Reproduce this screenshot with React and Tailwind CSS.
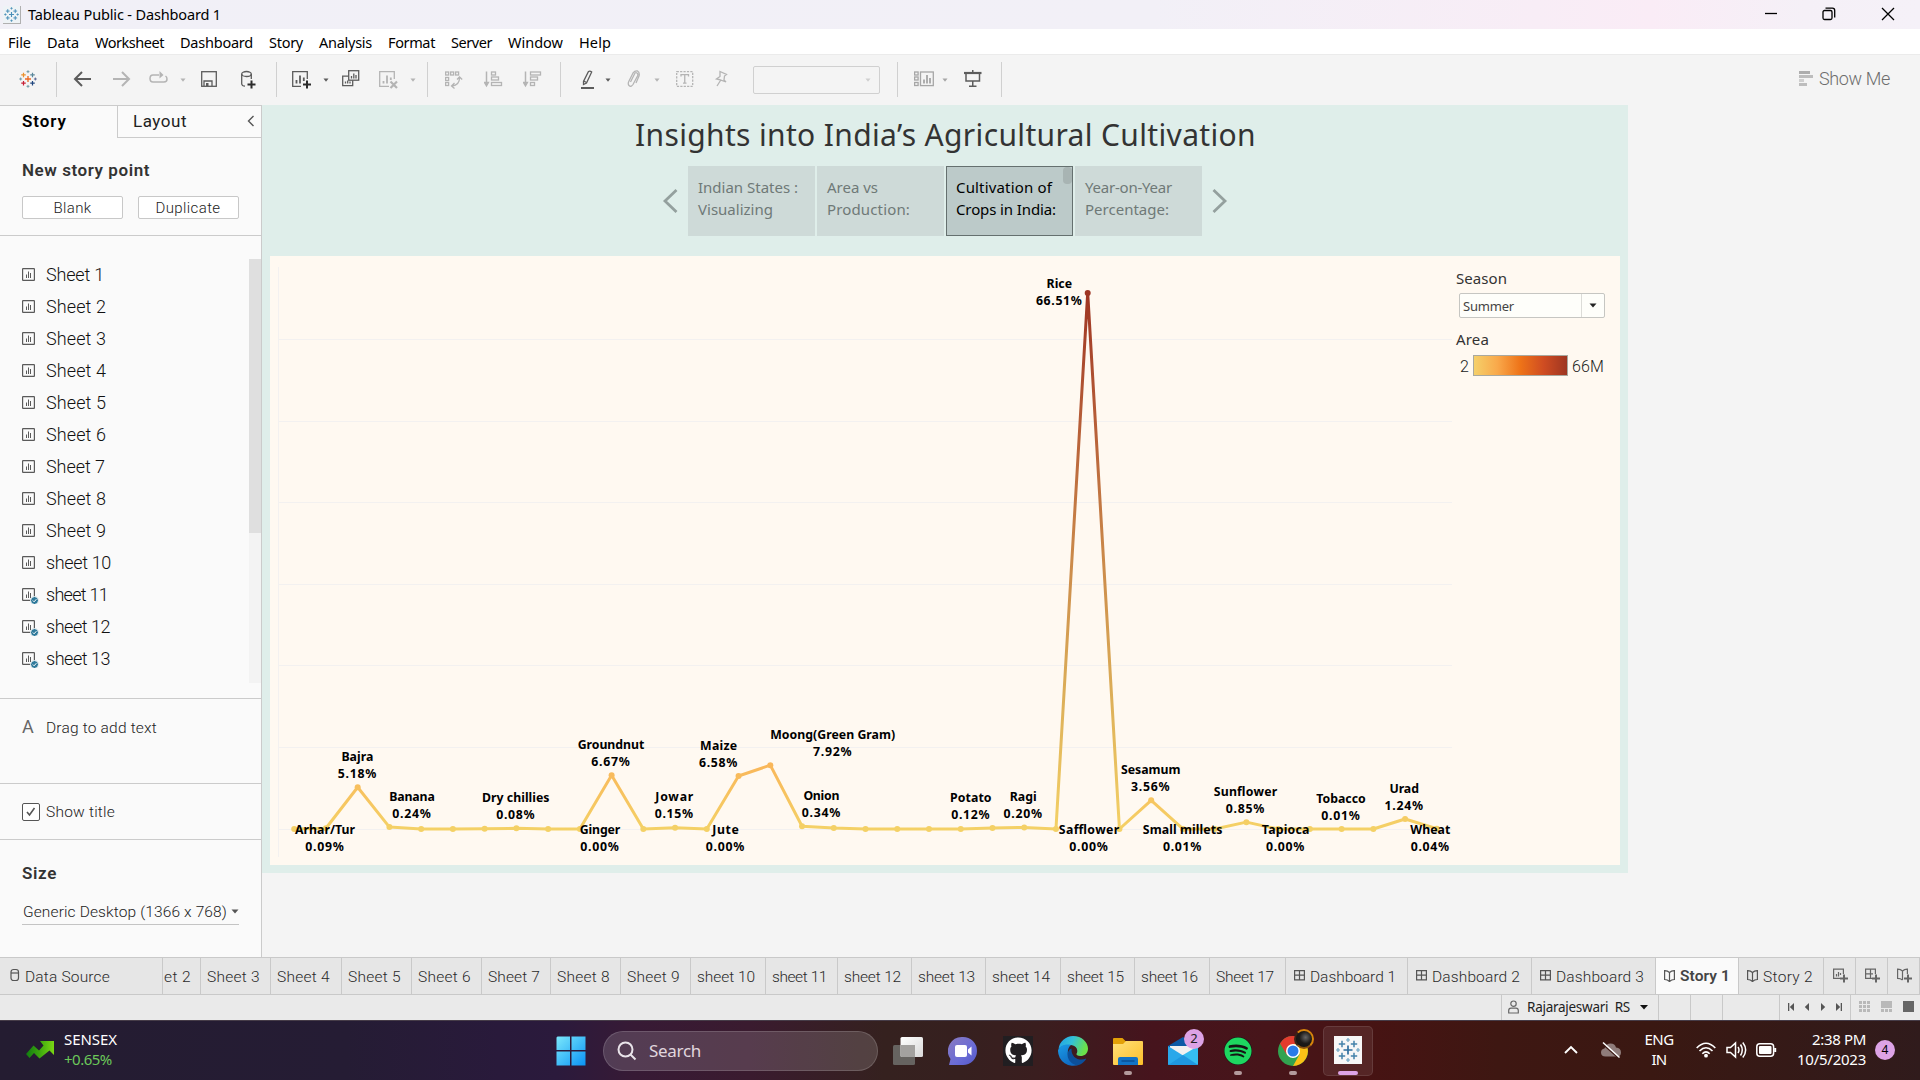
import React, { useLayoutEffect, useRef } from "react";
import { FaSpotify, FaGithub } from "react-icons/fa";

/* Single line of text tracked to a given width. */
function T({ w, className = "", children }) {
  const ref = useRef(null);
  useLayoutEffect(() => {
    const el = ref.current;
    el.style.letterSpacing = "0px";
    const natural = el.getBoundingClientRect().width;
    const n = el.textContent.length;
    el.style.letterSpacing = `${(w - natural) / n}px`;
  }, [w]);
  return (
    <span ref={ref} className={`inline-block shrink-0 whitespace-pre leading-none ${className}`}>
      {children}
    </span>
  );
}

const UI = "font-['Roboto',sans-serif]";
const UIS = "pt-[2px] font-light font-['Roboto',sans-serif]";
const TAB = "pt-[3px] font-['Roboto',sans-serif]";
const SEG = "font-['Noto_Sans',sans-serif]";

function Cross({ x, y, r, c, s = 1 }) {
  return <path d={`M${x - r} ${y}H${x + r}M${x} ${y - r}V${y + r}`} stroke={c} strokeWidth={s} fill="none" />;
}

function TableauMark({ size, mono, className = "" }) {
  const m = mono ? "#4a8fb8" : null;
  return (
    <svg width={size} height={size} viewBox="0 0 24 24" className={className}>
      <Cross x={12} y={12} r={4} c={m || "#eb6a24"} s={1.8} />
      <Cross x={6} y={6.5} r={3} c={m || "#eb912c"} s={1.6} />
      <Cross x={18} y={6.5} r={3} c={m || "#59879b"} s={1.6} />
      <Cross x={6} y={17.5} r={3} c={m || "#c72035"} s={1.6} />
      <Cross x={18} y={17.5} r={3} c={m || "#1f457e"} s={1.6} />
      <Cross x={12} y={2.2} r={1.9} c={m || "#7099a6"} s={1.3} />
      <Cross x={12} y={21.8} r={1.9} c={m || "#7099a6"} s={1.3} />
      <Cross x={2.2} y={12} r={1.9} c={m || "#7099a6"} s={1.3} />
      <Cross x={21.8} y={12} r={1.9} c={m || "#5b6591"} s={1.3} />
    </svg>
  );
}

/* ---------- title bar and menu ---------- */

function TitleBar() {
  return (
    <div className="flex h-[29px] items-center bg-[linear-gradient(90deg,#f1f0f7_0%,#f2f0f7_60%,#f8edf6_80%,#faecf6_86%,#f5f0f7_94%,#f5f1f8_100%)]">
      <div className="ml-[3px] flex h-[18px] w-[18px] items-center justify-center border-r border-b border-[#b0b0b0] bg-[#eef3f6]">
        <TableauMark size={15} mono />
      </div>
      <T w={193} className={`ml-[7px] text-[14.5px] text-black ${SEG}`}>Tableau Public - Dashboard 1</T>
      <svg width="160" height="20" viewBox="0 0 160 20" className="mb-px ml-auto" fill="none" stroke="#000" strokeWidth="1.3">
        <path d="M5 9.5H17" />
        <rect x="63" y="6.5" width="9" height="9" rx="1.5" />
        <path d="M65.500 4.2H72.500A2.2 2.2 0 0 1 74.700 6.4V13.5" />
        <path d="M122 4L134 16M134 4L122 16" />
      </svg>
    </div>
  );
}

const MENU = [
  ["File", 23], ["Data", 32], ["Worksheet", 69], ["Dashboard", 73], ["Story", 34],
  ["Analysis", 53], ["Format", 47], ["Server", 41], ["Window", 55], ["Help", 32],
];

function MenuBar() {
  return (
    <div className="flex h-[25px] items-center gap-4 bg-white pt-[2px] pl-2">
      {MENU.map(([label, w]) => (
        <T key={label} w={w} className={`text-[14.5px] text-black ${SEG}`}>{label}</T>
      ))}
    </div>
  );
}

/* ---------- toolbar ---------- */

const DK = "#5c5c5c";
const LT = "#b4b4b4";

function Ico({ w, className = "", c = DK, children }) {
  return (
    <svg width={w} height="20" viewBox={`0 0 ${w} 20`} className={`shrink-0 ${className}`} fill="none" stroke={c} strokeWidth="1.3">
      {children}
    </svg>
  );
}

function Caret({ c = DK, className = "" }) {
  return (
    <svg width="6" height="4" viewBox="0 0 6 4" className={`shrink-0 ${className}`}>
      <path d="M0.5 0.5H5.5L3 3.7Z" fill={c} />
    </svg>
  );
}

function Sep({ className = "" }) {
  return <div className={`h-[35px] w-px shrink-0 bg-[#d0d0d0] ${className}`} />;
}

function Toolbar() {
  return (
    <div className="flex h-[51px] items-center border-t border-[#ebebeb] bg-[#f4f4f4] pb-px">
      <TableauMark size={18} className="mb-[2px] ml-[19px]" />
      <Sep className="ml-[19px]" />
      <Ico w={18} className="ml-[16px]"><path d="M18 9H2M9 2L2 9L9 16" strokeWidth="2" /></Ico>
      <Ico w={18} className="ml-[22px]" c={LT}><path d="M0 9H16M9 2L16 9L9 16" strokeWidth="2" /></Ico>
      <Ico w={19} className="ml-[18px]" c={LT}>
        <path d="M10 5H4Q1 5 1 8.500Q1 12 4 12H15Q18 12 18 9Q18 7 16.500 6" strokeWidth="1.5" />
        <path d="M10.500 1L14.500 5L10.500 8.500Z" fill={LT} stroke="none" />
      </Ico>
      <Caret c={LT} className="ml-[12px]" />
      <Ico w={16} className="ml-[15px]">
        <rect x="0.7" y="1.700" width="14.600" height="14.600" />
        <path d="M3 16V11H11V16" /><rect x="5" y="13" width="2.500" height="3" fill={DK} stroke="none" />
      </Ico>
      <Ico w={15} className="ml-[24px]">
        <ellipse cx="5.500" cy="4" rx="4.800" ry="2.500" />
        <path d="M0.700 4V14Q1 16 4 16.200M10.300 4V9" />
        <path d="M10.500 10.500V18.500M6.500 14.500H14.500" stroke="#2b2b2b" strokeWidth="2" />
      </Ico>
      <Sep className="ml-[20px]" />
      <Ico w={19} className="ml-[15px]">
        <path d="M9 16.300H0.700V1.700H15.300V9" />
        <path d="M4.500 10V13.500M8 5.500V13.500M11.800 7.500V11" strokeWidth="1.800" />
        <path d="M15 10.500V18.500M11 14.500H19" stroke="#2b2b2b" strokeWidth="2" />
      </Ico>
      <Caret className="ml-[12px]" />
      <Ico w={18} className="ml-[13px]">
        <rect x="6.700" y="0.700" width="10" height="9.500" />
        <path d="M9.500 8.500V6M11.800 8.500V3.500M14 8.500V5" />
        <path d="M6.700 6.200H0.700V15.700H10.700V10.200M3.500 13.500V11.500M5.700 13.500V10.500M8 13.500V11.500" />
      </Ico>
      <Ico w={19} className="ml-[19px]" c={LT}>
        <path d="M10 16.300H0.700V1.700H15.300V9" />
        <path d="M4.500 11V13.500M8 5.500V13.500M11.800 7.500V10" strokeWidth="1.800" />
        <path d="M11.500 11.500L18 18M18 11.500L11.500 18" strokeWidth="2.200" />
      </Ico>
      <Caret c={LT} className="ml-[12px]" />
      <Sep className="ml-[11px]" />
      <Ico w={18} className="ml-[17px]" c={LT}>
        <rect x="0.600" y="2" width="3" height="3" /><rect x="5.600" y="2" width="3" height="3" /><rect x="10.600" y="2" width="3" height="3" />
        <rect x="0.600" y="7.500" width="3" height="3" /><rect x="0.600" y="12.500" width="3" height="3" />
        <path d="M7 16Q14.500 15 14.500 8M9.500 13L6.500 16L9.500 18.500M12 9.500L14.500 7L17.200 9.500" />
      </Ico>
      <Ico w={19} className="ml-[21px]" c={LT}>
        <path d="M2.500 1.500V14" strokeWidth="1.500" /><path d="M0.500 12.500L2.500 16L4.500 12.500Z" fill={LT} />
        <rect x="7.500" y="2" width="4" height="3" /><rect x="7.500" y="7" width="7" height="3" /><rect x="7.500" y="12.500" width="10" height="3" />
      </Ico>
      <Ico w={19} className="ml-[20px]" c={LT}>
        <path d="M2.500 1.500V14" strokeWidth="1.500" /><path d="M0.500 12.500L2.500 16L4.500 12.500Z" fill={LT} />
        <rect x="7.500" y="2" width="10" height="3" /><rect x="7.500" y="7" width="7" height="3" /><rect x="7.500" y="12.500" width="4" height="3" />
      </Ico>
      <Sep className="ml-[18px]" />
      <Ico w={14} className="ml-[20px]">
        <path d="M7.500 1.500Q9 0.500 10.700 2L5.500 13L2.500 14.500V11.500Z" /><path d="M2.800 11L5.500 12.500" />
        <path d="M0 18H13" strokeWidth="2" />
      </Ico>
      <Caret className="ml-[10px]" />
      <Ico w={14} className="ml-[16px]" c={LT}>
        <path d="M3.500 12L7.500 4Q8.500 2 10 3Q11.500 4 10.500 6L6 14.500Q4 17.500 2 15.500Q0.500 14 2 11L6 3Q8 0.500 10.500 1Q13 2.500 12 6L9 13" />
      </Ico>
      <Caret c={LT} className="ml-[13px]" />
      <Ico w={18} className="ml-[16px]" c={LT}>
        <rect x="0.700" y="1.700" width="16" height="14.600" strokeDasharray="2.200 1.200" />
        <path d="M5 6.500V4.700H12.500V6.500M8.750 4.700V13M7 13.200H10.500" />
      </Ico>
      <Ico w={14} className="ml-[20px]" c={LT}>
        <path d="M6 1.500L12.500 4.500L10.500 6L10 10L12 12L5 9.500L2.500 9L6 6.500Z M6.500 10.500L3 16" />
      </Ico>
      <div className="ml-[25px] flex h-[28px] w-[127px] shrink-0 items-center justify-end rounded-[2px] border border-[#d0d0d0] pr-[8px]">
        <Caret c="#cfcfcf" />
      </div>
      <Sep className="ml-[17px]" />
      <Ico w={20} className="ml-[16px]" c="#a6a6a6">
        <rect x="0.600" y="2" width="3.500" height="3" /><rect x="0.600" y="7" width="3.500" height="3" /><rect x="0.600" y="12.500" width="3.500" height="3" />
        <rect x="6.500" y="2" width="12.800" height="13.600" />
        <path d="M10 13.500V9.500M13 13.500V5M16 13.500V8" strokeWidth="1.800" />
      </Ico>
      <Caret c="#a6a6a6" className="ml-[8px]" />
      <Ico w={18} className="ml-[16px]">
        <path d="M0 3H17.500" strokeWidth="2.200" /><path d="M2 3V11H15.500V3M8.750 11V16M5 16.300H12.500M8.750 0V3" strokeWidth="1.500" />
      </Ico>
      <Sep className="ml-[19px]" />
      <svg width="15" height="16" viewBox="0 0 15 16" className="mb-[2px] ml-auto shrink-0">
        <rect x="0" y="0" width="11" height="3" fill="#adadad" /><rect x="0" y="4" width="14" height="3" fill="#bdbdbd" />
        <rect x="0" y="8" width="5" height="3" fill="#cfcfcf" /><rect x="0" y="12" width="8" height="3" fill="#bdbdbd" />
      </svg>
      <T w={71} className={`mr-[30px] mb-px ml-[5px] text-[18px] font-light text-[#6d6d6d] ${UI}`}>Show Me</T>
    </div>
  );
}

/* ---------- side panel ---------- */

const SHEETS = [
  ["Sheet 1", 58], ["Sheet 2", 60], ["Sheet 3", 60], ["Sheet 4", 60], ["Sheet 5", 60], ["Sheet 6", 60], ["Sheet 7", 59],
  ["Sheet 8", 60], ["Sheet 9", 60], ["sheet 10", 65], ["sheet 11", 62, 1], ["sheet 12", 64, 1], ["sheet 13", 64, 1],
];

function SheetIcon({ used }) {
  return (
    <svg width="18" height="18" viewBox="0 0 18 18" className="shrink-0" fill="none" stroke="#5a5a5a">
      <rect x="0.600" y="2.600" width="11.800" height="11.800" rx="0.500" strokeWidth="1.200" />
      <path d="M4.500 12V8.500M6.500 12V5.500M8.500 12V7" />
      {used && (
        <g>
          <circle cx="12.500" cy="14.500" r="4" fill="#2f7a9b" stroke="#fafafa" />
          <path d="M10.800 14.500L12.100 15.800L14.400 13.200" stroke="#fff" />
        </g>
      )}
    </svg>
  );
}

function SidePanel() {
  return (
    <div className="flex h-[852px] w-[262px] shrink-0 flex-col border-t border-r border-[#cbcbcb] bg-[#fafafa]">
      <div className="flex h-[32px] shrink-0">
        <div className="flex w-[117px] items-center pb-[2px] pl-[22px]">
          <T w={45} className={`text-[17px] font-semibold text-black ${UI}`}>Story</T>
        </div>
        <div className="flex flex-1 items-center border-b border-l border-[#cbcbcb] pl-[15px]">
          <T w={54} className={`text-[17px] text-[#222] ${UI}`}>Layout</T>
          <svg width="8" height="12" viewBox="0 0 8 12" className="mr-[6px] mb-[2px] ml-auto"><path d="M6.500 1L1.500 6L6.500 11" fill="none" stroke="#555" strokeWidth="1.400" /></svg>
        </div>
      </div>
      <div className="h-[98px] shrink-0 border-b border-[#cbcbcb] pt-[23px] pl-[22px]">
        <div className="flex h-[18px] items-center">
          <T w={128} className={`text-[17px] font-semibold text-[#333] ${UI}`}>New story point</T>
        </div>
        <div className="mt-[17px] flex gap-[15px]">
          <div className="flex h-[23px] w-[101px] items-center justify-center rounded-[2px] border border-[#c8c8c8] bg-white">
            <T w={38} className={`text-[15px] text-[#222] ${UIS}`}>Blank</T>
          </div>
          <div className="flex h-[23px] w-[101px] items-center justify-center rounded-[2px] border border-[#c8c8c8] bg-white pr-px">
            <T w={65} className={`text-[15px] text-[#222] ${UIS}`}>Duplicate</T>
          </div>
        </div>
      </div>
      <div className="flex h-[463px] shrink-0 border-b border-[#cbcbcb] pt-[23px]">
        <div className="flex-1 pl-[22px]">
          {SHEETS.map(([name, w, used]) => (
            <div key={name} className="flex h-[32px] items-center">
              <SheetIcon used={used} />
              <T w={w} className={`ml-[6px] text-[18px] font-light text-[#111] ${UI}`}>{name}</T>
            </div>
          ))}
        </div>
        <div className="h-[424px] w-[12px] bg-[#f3f3f3]"><div className="h-[274px] bg-[#dfdfdf]" /></div>
      </div>
      <div className="flex h-[85px] shrink-0 border-b border-[#cbcbcb] pt-[19px] pl-[22px]">
        <T w={14} className={`text-[18px] text-[#666] ${UI}`}>A</T>
        <T w={111} className={`mt-px ml-[10px] text-[15.500px] text-[#222] ${UIS}`}>Drag to add text</T>
      </div>
      <div className="flex h-[56px] shrink-0 items-center border-b border-[#cbcbcb] pl-[22px]">
        <div className="flex h-[18px] w-[18px] items-center justify-center rounded-[2px] border border-[#555] bg-white">
          <svg width="12" height="12" viewBox="0 0 12 12"><path d="M2 6L4.500 9L9.500 2" fill="none" stroke="#555" strokeWidth="1.600" /></svg>
        </div>
        <T w={69} className={`ml-[6px] text-[15.500px] text-[#222] ${UIS}`}>Show title</T>
      </div>
      <div className="flex flex-1 flex-col pt-[25px] pl-[22px]">
        <T w={35} className={`self-start text-[17px] font-semibold text-[#333] ${UI}`}>Size</T>
        <div className="mt-[17px] flex h-[26px] w-[217px] items-center border-b border-[#c4c4c4] pl-px">
          <T w={204} className={`text-[15.500px] text-[#222] ${UIS}`}>Generic Desktop (1366 x 768)</T>
          <svg width="8" height="5" viewBox="0 0 8 5" className="ml-[4px]"><path d="M0.500 0.500H7.500L4 4.500Z" fill="#555" /></svg>
        </div>
      </div>
    </div>
  );
}

/* ---------- story canvas ---------- */

const POINTS = [
  ["Indian States :", 100, "Visualizing", 75, false],
  ["Area vs", 51, "Production:", 83, false],
  ["Cultivation of", 96, "Crops in India:", 100, true],
  ["Year-on-Year", 87, "Percentage:", 84, false],
];

function StoryNav() {
  return (
    <div className="flex items-center">
      <svg width="16" height="26" viewBox="0 0 16 26" className="ml-[400px]"><path d="M14.500 2L3 13L14.500 24" fill="none" stroke="#94a09e" strokeWidth="2.800" /></svg>
      <div className="ml-[10px] flex gap-[2px]">
        {POINTS.map(([a, wa, b, wb, on]) => (
          <div key={a} className={`relative flex h-[70px] w-[127px] flex-col ${on ? "border border-[#65706f] bg-[#bccac9] pt-[13px] pl-[9px] text-black" : "bg-[#cedad8] pt-[14px] pl-[10px] text-[#6f7977]"}`}>
            <T w={wa} className={`self-start text-[15px] ${SEG}`}>{a}</T>
            <T w={wb} className={`mt-[7px] self-start text-[15px] ${SEG}`}>{b}</T>
            {on && <div className="absolute top-0 right-0 h-[17px] w-[9px] rounded-[4px] bg-[#a8b4b3]" />}
          </div>
        ))}
      </div>
      <svg width="16" height="26" viewBox="0 0 16 26" className="ml-[10px]"><path d="M1.500 2L13 13L1.500 24" fill="none" stroke="#94a09e" strokeWidth="2.800" /></svg>
    </div>
  );
}

const VALUES = [
  0, 0.09, 5.18, 0.24, 0, 0, 0.03, 0.08, 0, 0, 6.67, 0, 0.15, 0, 6.58, 7.92, 0.34, 0.12, 0, 0, 0, 0, 0.12, 0.2, 0, 66.51, 0,
  3.56, 0.01, 0, 0.85, 0, 0, 0.01, 0, 1.24, 0.04,
];
const X0 = 294.2, DX = 31.74, Y0 = 829, KY = 8.06;

/* name, value, centre x, baseline of the name, width of the name */
const LABELS = [
  ["Arhar/Tur", "0.09%", 325, 833.6, 60], ["Bajra", "5.18%", 357.4, 761, 32], ["Banana", "0.24%", 412, 801.3, 45.5],
  ["Dry chillies", "0.08%", 515.8, 802, 67.5], ["Ginger", "0.00%", 600, 833.6, 40.5], ["Groundnut", "6.67%", 611, 749.3, 66.5],
  ["Jowar", "0.15%", 674.3, 801.3, 38], ["Maize", "6.58%", 718.6, 750, 37], ["Jute", "0.00%", 725.5, 833.6, 26.5],
  ["Moong(Green Gram)", "7.92%", 832.7, 739.3, 125], ["Onion", "0.34%", 821.4, 800.3, 36], ["Potato", "0.12%", 970.8, 802.3, 41.5],
  ["Ragi", "0.20%", 1023.2, 801.3, 27], ["Rice", "66.51%", 1059.3, 288, 25.5], ["Safflower", "0.00%", 1089, 833.6, 60.5],
  ["Sesamum", "3.56%", 1150.7, 774, 59.5], ["Small millets", "0.01%", 1182.6, 833.6, 79.5], ["Sunflower", "0.85%", 1245.5, 796, 63.5],
  ["Tapioca", "0.00%", 1285.6, 833.6, 47.5], ["Tobacco", "0.01%", 1341, 803.3, 49.5], ["Urad", "1.24%", 1404.2, 793, 29.5],
  ["Wheat", "0.04%", 1430.3, 833.6, 40],
];

function Chart() {
  const pts = VALUES.map((v, i) => [X0 + i * DX, Y0 - v * KY]);
  const line = (a) => a.map((p) => p.join(",")).join(" ");
  return (
    <svg width="1180" height="609" viewBox="270 256 1180 609" className="shrink-0 overflow-visible">
      <defs>
        <linearGradient id="low" gradientUnits="userSpaceOnUse" x1="0" y1="829" x2="0" y2="765">
          <stop offset="0" stopColor="#f4d166" /><stop offset="1" stopColor="#f9b75a" />
        </linearGradient>
        <linearGradient id="peak" gradientUnits="userSpaceOnUse" x1="0" y1="829" x2="0" y2="293">
          <stop offset="0" stopColor="#f4d166" /><stop offset="0.250" stopColor="#dcae58" /><stop offset="0.500" stopColor="#cb8a4a" />
          <stop offset="0.750" stopColor="#b75f38" /><stop offset="1" stopColor="#9e3523" />
        </linearGradient>
      </defs>
      <g stroke="#f3f1f0" strokeWidth="1">
        {[339.5, 421.5, 502.5, 584.5, 665.5, 747.5, 829.5].map((y) => <path key={y} d={`M278 ${y}H1452`} />)}
        <path d="M278.500 267V857" />
      </g>
      <g fill="none" strokeWidth="3" strokeLinejoin="round">
        <polyline points={line(pts.slice(0, 25))} stroke="url(#low)" />
        <polyline points={line(pts.slice(26))} stroke="url(#low)" />
        <polyline points={line(pts.slice(24, 27))} stroke="url(#peak)" />
      </g>
      {pts.map(([x, y], i) => <circle key={i} cx={x} cy={y} r="3" fill={i === 25 ? "#9e3523" : "url(#low)"} />)}
      <g fontFamily="Noto Sans, sans-serif" fontWeight="700" fontSize="12.300" fill="#000" textAnchor="middle">
        {LABELS.map(([n, v, x, y, w]) => (
          <g key={n}>
            <text x={x} y={y} textLength={w}>{n}</text>
            <text x={x - 0.4} y={y + 17} textLength={v.length > 5 ? 46 : 38.500}>{v}</text>
          </g>
        ))}
      </g>
    </svg>
  );
}

function Legend() {
  return (
    <div className="ml-[6px] flex w-[164px] flex-col pt-[15px]">
      <T w={51} className={`self-start text-[15px] text-[#333] ${SEG}`}>Season</T>
      <div className="mt-[7px] ml-[3px] flex h-[25px] w-[146px] rounded-[2px] border border-[#c6c6c2] bg-[#fefefa]">
        <div className="flex flex-1 items-center border-r border-[#dcdcd8] pt-[2px] pl-[3px]">
          <T w={51} className={`text-[13px] text-[#444] ${SEG}`}>Summer</T>
        </div>
        <div className="flex w-[22px] items-center justify-center">
          <svg width="8" height="5" viewBox="0 0 8 5"><path d="M0.500 0.500H7.500L4 4.500Z" fill="#222" /></svg>
        </div>
      </div>
      <T w={33} className={`mt-[14px] self-start text-[15px] text-[#333] ${SEG}`}>Area</T>
      <div className="mt-[8px] ml-[4px] flex h-[21px] items-center">
        <T w={9} className={`text-[16px] text-[#222] ${UIS}`}>2</T>
        <div className="ml-[4px] h-[21px] w-[95px] border border-[#a9a9a0] bg-[linear-gradient(90deg,#f5d06a,#f9a94b_25%,#ee7318_50%,#cf4c22_75%,#9e3622)]" />
        <T w={32} className={`ml-[4px] text-[16px] text-[#222] ${UIS}`}>66M</T>
      </div>
    </div>
  );
}

function Canvas() {
  return (
    <div className="h-[768px] w-[1366px] bg-[#dfeeea]">
      <div className="flex h-[61px] items-center pb-px pl-[373px]">
        <T w={621} className={`text-[30px] text-[#333] ${SEG}`}>Insights into India’s Agricultural Cultivation</T>
      </div>
      <StoryNav />
      <div className="mt-[20px] ml-[8px] flex h-[609px] w-[1350px] bg-[#fff9f1]">
        <Chart />
        <Legend />
      </div>
    </div>
  );
}

/* ---------- tabs and status ---------- */

const TABS = [
  ["Sheet 3", 70, 53], ["Sheet 4", 71, 53], ["Sheet 5", 70, 53], ["Sheet 6", 70, 53], ["Sheet 7", 69, 52], ["Sheet 8", 70, 53],
  ["Sheet 9", 70, 53], ["sheet 10", 75, 58], ["sheet 11", 72, 55], ["sheet 12", 74, 57], ["sheet 13", 74, 57], ["sheet 14", 75, 58],
  ["sheet 15", 74, 57], ["sheet 16", 75, 57], ["Sheet 17", 76, 58], ["Dashboard 1", 122, 86], ["Dashboard 2", 124, 88],
  ["Dashboard 3", 124, 88], ["Story 1", 83, 50], ["Story 2", 85, 50],
];

function GridIcon() {
  return <path d="M0.600 1.600H10.400V10.900H0.600ZM5.500 1.600V10.900M0.600 6.200H10.400" />;
}
function BookIcon() {
  return <path d="M5.500 3.500Q3.500 1.500 0.600 1.600V10.500Q3.500 10.500 5.500 12.500Q7.500 10.500 10.400 10.500V1.600Q7.500 1.500 5.500 3.500V12" />;
}

function TabBar() {
  return (
    <div className="flex h-[38px] border-y border-[#c9c9c9] bg-[#e6e6e6]">
      <div className="flex w-[163px] items-center border-r border-[#c9c9c9] pl-[10px]">
        <svg width="10" height="14" viewBox="0 0 10 14" className="mb-[3px]" fill="none" stroke="#555" strokeWidth="1.200"><rect x="1" y="1.500" width="7.500" height="11" rx="2.500" /><path d="M1 5H8.500" /></svg>
        <T w={85} className={`ml-[5px] text-[15.500px] font-light text-[#2a2a2a] ${TAB}`}>Data Source</T>
      </div>
      <div className="flex w-[38px] items-center border-r border-[#c9c9c9] pl-px">
        <T w={27} className={`text-[15.500px] font-light text-[#2a2a2a] ${TAB}`}>et 2</T>
      </div>
      {TABS.map(([name, w, tw]) => {
        const dash = name.startsWith("Dash");
        const story = name.startsWith("Story");
        const on = name === "Story 1";
        return (
          <div key={name} style={{ width: w }} className={`flex shrink-0 items-center border-r border-[#c9c9c9] ${on ? "bg-[#fafafa]" : ""} ${dash || story ? "pl-[8px]" : "pl-[6px]"}`}>
            {(dash || story) && (
              <svg width="11" height="13" viewBox="0 0 11 13" className={dash ? "mr-[5px] mb-[2px]" : "mr-[5px] mb-[1px]"} fill="none" stroke="#555" strokeWidth="1.200">
                {dash ? <GridIcon /> : <BookIcon />}
              </svg>
            )}
            <T w={tw} className={`text-[15.500px] ${on ? "mb-px font-semibold text-[#444]" : "font-light text-[#2a2a2a]"} ${TAB}`}>{name}</T>
          </div>
        );
      })}
      {["s", "g", "b"].map((k) => (
        <div key={k} className="flex w-[32px] items-center justify-center border-r border-[#c9c9c9] pl-[2px]">
          <svg width="16" height="16" viewBox="0 0 16 16" fill="none" stroke="#666" strokeWidth="1.200">
            {k === "s" && <path d="M7 10.400H0.600V1.100H10.400V6M3.500 8.500V6M5.500 8.500V4M7.500 7V5" />}
            {k === "g" && <path d="M7 10.400H0.600V1.100H10.400V6M5.500 1.100V10.400M0.600 5.800H8" />}
            {k === "b" && <path d="M5.500 3Q3.500 1 0.600 1.100V10.400Q3.500 10.400 5.500 12M10.400 6V1.100Q7.500 1 5.500 3V12" />}
            <path d="M11 6.500V14.500M7 10.500H15" strokeWidth="2" />
          </svg>
        </div>
      ))}
    </div>
  );
}

function StatusBar() {
  return (
    <div className="flex h-[25px] justify-end bg-[#eaeaea]">
      <div className="flex w-[157px] items-center border-l border-[#c9c9c9] pl-[6px]">
        <svg width="11" height="14" viewBox="0 0 11 14" className="mb-px" fill="none" stroke="#666" strokeWidth="1.200"><circle cx="5.500" cy="3.700" r="2.700" /><path d="M0.700 13V10.500Q0.700 8.200 3 8.200H8Q10.300 8.200 10.300 10.500V13Z" /></svg>
        <T w={103} className={`ml-[8px] text-[13.500px] text-[#222] ${SEG}`}>Rajarajeswari  RS</T>
        <svg width="8" height="5" viewBox="0 0 8 5" className="ml-[10px]"><path d="M0 0H8L4 4.500Z" fill="#111" /></svg>
      </div>
      <div className="w-[32px] border-l border-[#c9c9c9]" />
      <div className="w-[32px] border-l border-[#c9c9c9]" />
      <div className="w-[57px] border-l border-[#c9c9c9]" />
      <div className="flex w-[71px] items-center border-l border-[#c9c9c9] pb-[2px] pl-[8px]">
        <svg width="56" height="8" viewBox="0 0 56 8" fill="#555"><path d="M0 0H1.300V8H0ZM6 0V8L1.800 4ZM21 0V8L16.800 4ZM33 0V8L37.200 4ZM48 0V8L52.200 4ZM52.700 0H54V8H52.700Z" /></svg>
      </div>
      <div className="flex w-[70px] items-center border-l border-[#c9c9c9] pb-[2px] pl-[8px]">
        <svg width="56" height="12" viewBox="0 0 56 12" fill="#b9b9b9">
          {[0, 4, 8].map((x) => [0, 4, 8].map((y) => <rect key={`${x}-${y}`} x={x} y={y} width="3" height="3" />))}
          <rect x="22" y="0" width="11" height="7" />
          {[22, 26, 30].map((x) => <rect key={x} x={x} y="8" width="3" height="3" />)}
          <rect x="44" y="0" width="11" height="11" fill="#666" />
        </svg>
      </div>
    </div>
  );
}

/* ---------- taskbar ---------- */

function App30({ children, dot }) {
  return (
    <div className="relative flex h-[60px] w-[30px] shrink-0 items-center justify-center">
      {children}
      {dot && <div className="absolute bottom-[6px] left-[11px] h-[4px] w-[8px] rounded-full bg-[#b39a9c]" />}
    </div>
  );
}

function Taskbar() {
  return (
    <div className="flex h-[60px] items-center border-t border-[#463c48] bg-[linear-gradient(90deg,#241c31_0%,#251c34_18%,#291a3b_26%,#2b1a3c_29%,#371a35_33%,#3a1b2f_39%,#35211f_46%,#36201f_50%,#3a1e1f_54%,#46141d_60%,#47151a_66%,#471313_71%,#3e1712_78%,#3a1812_86%,#301b1c_100%)]">
      <svg width="28" height="20" viewBox="0 0 28 20" className="mb-[4px] ml-[26px]">
        <defs><linearGradient id="up" x1="0" x2="1"><stop offset="0" stopColor="#107c10" /><stop offset="0.500" stopColor="#3ea80e" /><stop offset="1" stopColor="#7bd614" /></linearGradient></defs>
        <path d="M0 15L7.500 6.500L13 11.500L17.500 6.500L14 2H28V16L23.500 11.500L13.500 19.500L8 14L3.500 19Z" fill="url(#up)" />
      </svg>
      <div className="mb-[3px] ml-[10px] flex flex-col gap-[5px]">
        <T w={53} className={`text-[15px] text-white ${SEG}`}>SENSEX</T>
        <T w={50} className={`text-[15px] text-[#6cc85a] ${SEG}`}>+0.65%</T>
      </div>
      <svg width="30" height="30" viewBox="0 0 30 30" className="ml-[439px]">
        <defs><linearGradient id="win" x1="0" y1="0" x2="1" y2="1"><stop offset="0" stopColor="#7be8fb" /><stop offset="1" stopColor="#0a93f5" /></linearGradient></defs>
        <path d="M1.500 0.500H14V14H0.500V1.500ZM15.500 0.500H29.500V14H15.500ZM0.500 15.500H14V29.500H0.500ZM15.500 15.500H29.500V29.500H15.500Z" fill="url(#win)" />
      </svg>
      <div className="ml-[17px] flex h-[40px] w-[275px] items-center rounded-full border border-white/15 bg-white/15 pl-[13px]">
        <svg width="20" height="20" viewBox="0 0 20 20" fill="none" stroke="#e9e4ea" strokeWidth="2"><circle cx="8.500" cy="8.500" r="7" /><path d="M13.500 13.500L18.500 18.500" /></svg>
        <T w={52} className={`ml-[12px] text-[17px] text-[#e0d6de] ${SEG}`}>Search</T>
      </div>
      <div className="ml-[15px] flex gap-[25px]">
        <App30>
          <svg width="30" height="30" viewBox="0 0 30 30">
            <defs><linearGradient id="tv" x1="0" y1="0" x2="1" y2="1"><stop offset="0" stopColor="#fff" /><stop offset="1" stopColor="#d9d9d9" /></linearGradient></defs>
            <rect x="0" y="9" width="22" height="20" rx="1.500" fill="#666360" /><rect x="7.500" y="1" width="22.500" height="20" rx="1.500" fill="url(#tv)" />
            <path d="M7.500 9H22V21H9Q7.500 21 7.500 19.500Z" fill="#a3a19f" />
          </svg>
        </App30>
        <App30>
          <svg width="30" height="30" viewBox="0 0 30 30">
            <defs><linearGradient id="chat" x1="0" y1="0" x2="1" y2="1"><stop offset="0" stopColor="#8a7bc0" /><stop offset="0.600" stopColor="#6a6cd6" /><stop offset="1" stopColor="#5458c8" /></linearGradient></defs>
            <path d="M15 1A14 14 0 1 1 15 29H1L2.500 23A14 14 0 0 1 15 1Z" fill="url(#chat)" />
            <rect x="7" y="9" width="12" height="12" rx="2" fill="#fff" /><path d="M20 13.500L23.500 10.500V19.500L20 16.500Z" fill="#fff" />
          </svg>
        </App30>
        <App30>
          <div className="flex h-[30px] w-[30px] items-center justify-center bg-[#211e21]"><FaGithub size={27} color="#fff" /></div>
        </App30>
        <App30>
          <svg width="30" height="30" viewBox="0 0 30 30">
            <defs>
              <linearGradient id="e1" x1="0" y1="0" x2="1" y2="0.300"><stop offset="0" stopColor="#1f9fe8" /><stop offset="0.500" stopColor="#34c1d6" /><stop offset="1" stopColor="#6be04a" /></linearGradient>
              <linearGradient id="e2" x1="0" y1="0" x2="0.600" y2="1"><stop offset="0" stopColor="#1b9be6" /><stop offset="1" stopColor="#0f68c0" /></linearGradient>
            </defs>
            <path d="M0.500 13A15 15 0 0 1 15 0C24 0 30 6.500 30 12.500C30 17.500 26.500 20 22.500 20C19.500 20 18 19 18.500 17.800C20.500 15 19 9.500 13 9C7 8.500 1.500 11 0.500 13Z" fill="url(#e1)" />
            <path d="M0 14.500C1.500 9.500 8 7.500 13 9C8 12 7.500 27 21 28.500A15 15 0 0 1 0 14.500Z" fill="url(#e2)" />
            <path d="M13.500 12.500C7 15 8.500 27 19 29.400C23.500 28.800 27 25.500 28.200 22.500C22 25.500 13 22.500 13.500 12.500Z" fill="#0c4f9a" />
          </svg>
        </App30>
        <App30 dot>
          <svg width="30" height="30" viewBox="0 0 30 30">
            <defs><linearGradient id="fo" x1="0" y1="0" x2="1" y2="1"><stop offset="0" stopColor="#ffe07a" /><stop offset="1" stopColor="#fcbf2a" /></linearGradient></defs>
            <path d="M0 3Q0 2 1 2H9.500L12.500 5H18V9H0Z" fill="#e3a008" />
            <path d="M0 8H10L13 5H29Q30 5 30 6V28Q30 29 29 29H1Q0 29 0 28Z" fill="url(#fo)" />
            <path d="M5 29V23Q5 21 7 21H23Q25 21 25 23V29Z" fill="#1173c6" /><path d="M8.500 25H21.500" stroke="#0a4f96" strokeWidth="1.500" />
          </svg>
        </App30>
        <App30>
          <svg width="30" height="30" viewBox="0 0 30 30">
            <path d="M0 10L15 1L30 10V20H0Z" fill="#0c5aa6" /><path d="M2 10H28V22H2Z" fill="#f1f1f1" />
            <path d="M0 10L30 29H1Q0 29 0 28Z" fill="#2aa8ea" /><path d="M30 10V28Q30 29 29 29H0L15 19Z" fill="#35bdf0" /><path d="M15 19L30 29H0Z" fill="#1f97e0" />
          </svg>
          <div className="absolute top-[8px] left-[16px] flex h-[20px] w-[20px] items-center justify-center rounded-full bg-[#dda3e6] font-['Noto_Sans',sans-serif] text-[13px] leading-none text-[#222]">2</div>
        </App30>
        <App30 dot>
          <div className="rounded-full bg-[#151515] p-[2px]"><FaSpotify size={28} color="#1ed760" className="-m-[2px]" /></div>
        </App30>
        <App30 dot>
          <svg width="30" height="30" viewBox="0 0 30 30">
            <circle cx="15" cy="15" r="15" fill="#32a350" />
            <path d="M15 15L2 7.500A15 15 0 0 1 28 7.500L15 8Z" fill="#e33b2e" />
            <path d="M15 8H28.200A15 15 0 0 1 15 30L21.500 18.500Z" fill="#fbc116" />
            <path d="M2 7.500L8.800 18.800L15 15L15 8Z" fill="#e33b2e" />
            <circle cx="15" cy="15" r="7" fill="#fff" /><circle cx="15" cy="15" r="5.500" fill="#2a7ae8" />
          </svg>
          <div className="absolute top-[8px] left-[16px] h-[20px] w-[20px] rounded-full border-2 border-[#d9860c] border-b-[#8a5210] border-l-[#3a2418] bg-[radial-gradient(circle_at_60%_40%,#666_0%,#1c1a18_45%,#111_100%)]" />
        </App30>
      </div>
      <div className="relative ml-[15px] flex h-[50px] w-[50px] items-center justify-center rounded-[5px] border border-white/10 bg-white/8">
        <div className="mb-[2px] flex h-[28px] w-[28px] items-center justify-center bg-[#f7f7f7]">
          <svg width="24" height="24" viewBox="0 0 24 24"><Cross x={12} y={12} r={4.5} c="#2f6f9f" s={1.700} />
            {[[6, 6], [18, 6], [6, 18], [18, 18]].map(([x, y]) => <Cross key={`${x}${y}`} x={x} y={y} r={3.2} c="#4583ab" s={1.500} />)}
            {[[12, 2], [12, 22], [2, 12], [22, 12]].map(([x, y]) => <Cross key={`${x}${y}`} x={x} y={y} r={2} c="#6ba3c2" s={1.200} />)}
          </svg>
        </div>
        <div className="absolute bottom-0 left-[14px] h-[4px] w-[20px] rounded-full bg-[#dda3e6]" />
      </div>

      <svg width="14" height="9" viewBox="0 0 14 9" className="mb-[2px] ml-auto" fill="none" stroke="#fff" strokeWidth="1.900"><path d="M1 8L7 2L13 8" /></svg>
      <svg width="22" height="18" viewBox="0 0 22 18" className="mb-px ml-[22px]">
        <path d="M5.500 15.500Q1 15.500 1 11.500Q1 8 4.500 7.500Q6 2.500 10.500 2.500Q15 2.500 16 6.500Q21 7 21 11.500Q21 15.500 17 15.500Z" fill="#8f7c7a" />
        <path d="M2 2.500L18.500 17" stroke="#3a1812" strokeWidth="1.500" /><path d="M3 1.500L19.500 16.500" stroke="#fff" strokeWidth="1.500" />
      </svg>
      <div className="mb-[2px] ml-[22px] flex w-[30px] flex-col items-center gap-[5px]">
        <T w={29} className={`text-[15px] text-white ${SEG}`}>ENG</T>
        <T w={15} className={`text-[15px] text-white ${SEG}`}>IN</T>
      </div>
      <svg width="20" height="16" viewBox="0 0 20 16" className="mb-[2px] ml-[22px]" fill="none" stroke="#fff" strokeWidth="1.600">
        <path d="M0.700 6Q10 -3.500 19.300 6M3.500 9Q10 2.500 16.500 9M6.300 11.800Q10 8 13.700 11.800" /><circle cx="10" cy="13.700" r="1.900" fill="#fff" stroke="none" />
      </svg>
      <svg width="21" height="18" viewBox="0 0 21 18" className="mb-px ml-[10px]" fill="none" stroke="#fff" strokeWidth="1.500">
        <path d="M1 6.500H4.500L9.500 2V16L4.500 11.500H1Z" /><path d="M12 6Q14 9 12 12M14.500 3.500Q18 9 14.500 14.500M16.800 1.500Q22.500 9 16.800 16.500" />
      </svg>
      <svg width="21" height="14" viewBox="0 0 21 14" className="mb-px ml-[9px]" fill="none" stroke="#fff" strokeWidth="1.500">
        <rect x="0.800" y="0.800" width="16.800" height="12.400" rx="3" /><rect x="3" y="3" width="12.500" height="8" rx="1" fill="#fff" stroke="none" /><path d="M19.200 5V9" strokeWidth="2" />
      </svg>
      <div className="mb-[3px] ml-[20px] flex w-[69px] flex-col items-end gap-[5px]">
        <T w={54} className={`text-[15px] text-white ${SEG}`}>2:38 PM</T>
        <T w={69} className={`text-[15px] text-white ${SEG}`}>10/5/2023</T>
      </div>
      <div className="mr-[25px] mb-px ml-[9px] flex h-[20px] w-[20px] items-center justify-center rounded-full bg-[#dda3e6] font-['Noto_Sans',sans-serif] text-[12px] leading-none text-black">4</div>
    </div>
  );
}

export default function App() {
  return (
    <div className="flex h-[1080px] w-[1920px] flex-col overflow-hidden bg-[#f4f4f4]">
      <TitleBar />
      <MenuBar />
      <Toolbar />
      <div className="flex h-[852px]">
        <SidePanel />
        <Canvas />
      </div>
      <TabBar />
      <StatusBar />
      <Taskbar />
    </div>
  );
}
